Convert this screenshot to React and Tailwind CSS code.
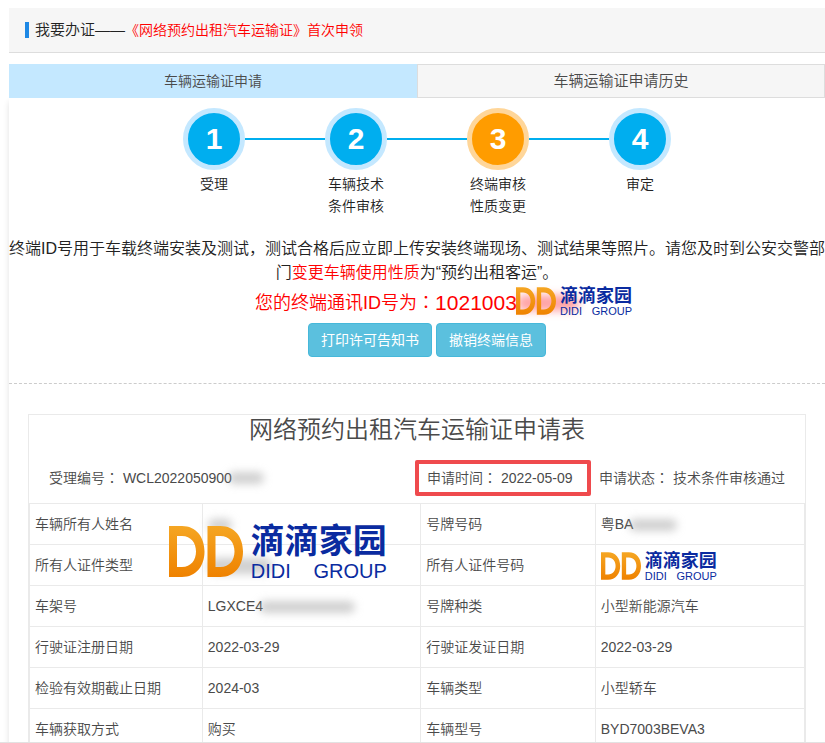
import React from "react";

const steps = [
  { no: 1, lines: ["受理"] },
  { no: 2, lines: ["车辆技术", "条件审核"] },
  { no: 3, lines: ["终端审核", "性质变更"], current: true },
  { no: 4, lines: ["审定"] },
];

const Mask = ({ className }) => (
  <span className={`inline-block rounded-full bg-neutral-400/50 blur-xs align-middle ${className}`}></span>
);

// centred full-width colon
const Colon = () => (
  <span className="font-['Liberation_Sans','Noto_Sans_CJK_TC',sans-serif]">：</span>
);

const DidiLogo = ({ large }) => (
  <span className={`flex items-start whitespace-nowrap font-normal ${large ? "gap-2" : "gap-1 pt-1"}`}>
    <svg viewBox="0 0 74 51" className={large ? "w-[74px] h-[51px] shrink-0" : "w-10 h-7 shrink-0"} aria-hidden="true">
      <defs>
        <linearGradient id="didiOrange" x1="0" y1="0" x2="0" y2="1">
          <stop offset="0" stopColor="#f5a623" />
          <stop offset="1" stopColor="#ef8200" />
        </linearGradient>
      </defs>
      <g fill="url(#didiOrange)" fillRule="evenodd">
        <path d="M0 0H13C27 0 35.5 11 35.5 25.500S27 51 13 51H0ZM8 10V41H13C22 41 27 34 27 25.500S22 10 13 10Z" />
        <path d="M38.500 0H51.500C65.500 0 74 11 74 25.500S65.500 51 51.500 51H38.500ZM46.500 10V41H51.500C60.500 41 65.500 34 65.500 25.500S60.500 10 51.500 10Z" />
      </g>
    </svg>
    <span className="flex flex-col text-[#0a2ba0]">
      <span className={`font-bold ${large ? "text-[34px] leading-[30px]" : "text-[18px] leading-[18px]"}`}>
        滴滴家园
      </span>
      <span className={`flex justify-between ${large ? "text-[20px] leading-[30px]" : "text-[11px] leading-[12px]"}`}>
        <span>DIDI</span>
        <span>GROUP</span>
      </span>
    </span>
  </span>
);

const rows = [
  [
    "车辆所有人姓名",
    <>
      <Mask className="w-6 h-3" />
      <span className="absolute left-[-34px] top-[22px] z-10">
        <DidiLogo large />
      </span>
    </>,
    "号牌号码",
    <>
      粤BA
      <Mask className="w-12 h-3 -ml-1" />
    </>,
  ],
  ["所有人证件类型", <Mask className="w-16 h-4" />, "所有人证件号码", <DidiLogo />],
  [
    "车架号",
    <>
      LGXCE4
      <Mask className="w-24 h-3 -ml-1" />
    </>,
    "号牌种类",
    "小型新能源汽车",
  ],
  ["行驶证注册日期", "2022-03-29", "行驶证发证日期", "2022-03-29"],
  ["检验有效期截止日期", "2024-03", "车辆类型", "小型轿车"],
  ["车辆获取方式", "购买", "车辆型号", "BYD7003BEVA3"],
];

const cell = "relative h-[41px] border border-[#eaeaea] px-[5px] py-0";

const App = () => {
  return (
    <div className="h-screen overflow-hidden border-b border-[#e2e2e2] bg-white pl-[9px] pt-2 text-sm font-[350] text-[#4a4a4a] font-['Liberation_Sans','Noto_Sans_CJK_SC',sans-serif]">
      <header className="flex h-[45px] items-center border-b border-[#ddd] bg-[#f6f6f6] pl-4">
        <div className="h-4 w-1 bg-[#1e88e5]"></div>
        <h1 className="ml-1.5 text-[15px] text-[#222]">
          我要办证——<span className="text-sm text-[#f00]">《网络预约出租汽车运输证》首次申领</span>
        </h1>
      </header>

      <nav className="mt-[11px] grid h-[34px] grid-cols-2">
        <button className="bg-[#c4e8ff] text-sm">车辆运输证申请</button>
        <button className="border border-[#ddd] bg-[#f6f6f6] text-[15px]">车辆运输证申请历史</button>
      </nav>

      <main className="min-h-screen shadow-[0_4px_6px_rgba(0,0,0,0.12)]">
        <ol className="flex justify-center pl-5 pt-[10px]">
          {steps.map((step, i) => (
            <li key={step.no} className="w-[142px] text-center leading-[22px] text-[#222]">
              <div className="flex items-center">
                <div className={`h-0.5 flex-1 ${i > 0 ? "bg-[#00aeef]" : ""}`}></div>
                <div
                  className={`flex size-[62px] items-center justify-center rounded-full border-5 text-[30px] font-bold text-white ${
                    step.current ? "border-[#ffd699] bg-[#ff9c00]" : "border-[#c4e8ff] bg-[#00aeef]"
                  }`}
                >
                  {step.no}
                </div>
                <div className={`h-0.5 flex-1 ${i < steps.length - 1 ? "bg-[#00aeef]" : ""}`}></div>
              </div>
              <div className="mt-[3px]">
                {step.lines.map((line) => (
                  <div key={line}>{line}</div>
                ))}
              </div>
            </li>
          ))}
        </ol>

        <section className="border-b border-dashed border-[#ccc] pb-[26px] text-center">
          <p className="-mx-1 mt-5 text-base text-[#222]">
            终端ID号用于车载终端安装及测试，测试合格后应立即上传安装终端现场、测试结果等照片。请您及时到公安交警部
            <br />门<span className="text-[#f00]">变更车辆使用性质</span>为“预约出租客运”。
          </p>
          <p className="mt-1 flex items-center justify-center text-lg leading-[28px] text-[#f00]">
            您的终端通讯ID号为<Colon />
            <span className="relative flex items-center text-[21px]">
              1021003
              <span className="h-4 w-[62px] rounded-full bg-red-400/60 blur-xs"></span>
              <span className="absolute left-[81px] -top-1.5">
                <DidiLogo />
              </span>
            </span>
          </p>
          <div className="mt-1.5 flex justify-center gap-1 pl-5 text-white">
            <button className="h-[34px] rounded border border-[#46b8da] bg-[#5bc0de] px-3 font-normal">打印许可告知书</button>
            <button className="h-[34px] rounded border border-[#46b8da] bg-[#5bc0de] px-3 font-normal">撤销终端信息</button>
          </div>
        </section>

        <section className="mx-[19px] mt-[30px] border border-[#eaeaea]">
          <h2 className="text-center text-2xl leading-[30px]">网络预约出租汽车运输证申请表</h2>
          <div className="mt-[15px] grid h-9 grid-cols-[386fr_176fr_214fr]">
            <div className="flex items-center pl-5">
              受理编号<Colon />&nbsp;WCL2022050900
              <Mask className="w-9 h-3 -ml-1" />
            </div>
            <div className="flex items-center rounded-xs border-4 border-[#ef4a4d] pl-2">
              申请时间<Colon />&nbsp;2022-05-09
            </div>
            <div className="flex items-center pl-2">
              申请状态<Colon />&nbsp;技术条件审核通过
            </div>
          </div>
          <table className="mt-[7px] w-full table-fixed border-collapse">
            <colgroup>
              <col className="w-[22.3%]" />
              <col className="w-[28.2%]" />
              <col className="w-[22.5%]" />
              <col className="w-[27%]" />
            </colgroup>
            <tbody>
              {rows.map((row) => (
                <tr key={row[0]}>
                  <th scope="row" className={`${cell} text-left font-[350]`}>{row[0]}</th>
                  <td className={cell}>{row[1]}</td>
                  <th scope="row" className={`${cell} text-left font-[350]`}>{row[2]}</th>
                  <td className={cell}>{row[3]}</td>
                </tr>
              ))}
            </tbody>
          </table>
        </section>
      </main>
    </div>
  );
};

export default App;
